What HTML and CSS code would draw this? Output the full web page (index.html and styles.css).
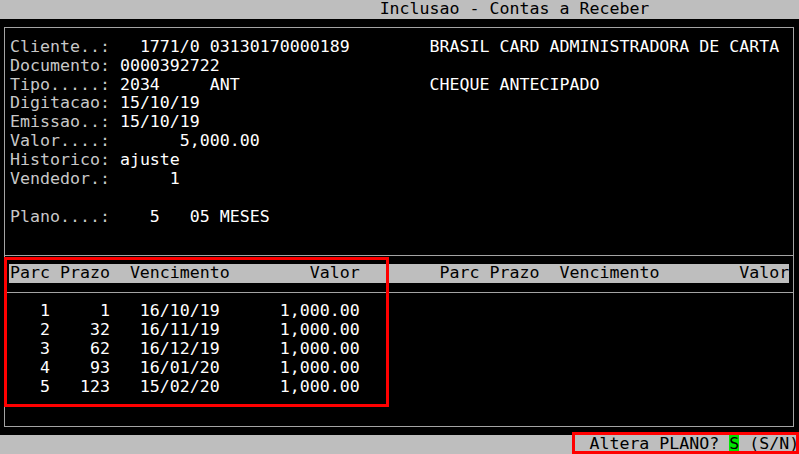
FILE: index.html
```html
<!DOCTYPE html>
<html lang="pt-br">
<head>
    <meta charset="UTF-8">
    <title>Inclusao - Contas a Receber</title>
    <link rel="stylesheet" href="styles.css">
</head>
<body>
    <div class="term">
        <div class="row bar title">Inclusao - Contas a Receber</div>

        <div class="frame">
            <div class="row"><span class="lbl">Cliente..:</span>   1771/0 03130170000189        BRASIL CARD ADMINISTRADORA DE CARTA</div>
            <div class="row"><span class="lbl">Documento:</span> 0000392722</div>
            <div class="row"><span class="lbl">Tipo.....:</span> 2034     ANT                   CHEQUE ANTECIPADO</div>
            <div class="row"><span class="lbl">Digitacao:</span> 15/10/19</div>
            <div class="row"><span class="lbl">Emissao..:</span> 15/10/19</div>
            <div class="row"><span class="lbl">Valor....:</span>       5,000.00</div>
            <div class="row"><span class="lbl">Historico:</span> ajuste</div>
            <div class="row"><span class="lbl">Vendedor.:</span>      1</div>
            <div class="row"></div>
            <div class="row"><span class="lbl">Plano....:</span>    5   05 MESES</div>
            <div class="row"></div>

            <div class="row sep"></div>
            <div class="row head">Parc Prazo  Vencimento        Valor        Parc Prazo  Vencimento        Valor</div>
            <div class="row sep"></div>

            <!-- parcelas -->
            <div class="row">   1     1   16/10/19      1,000.00</div>
            <div class="row">   2    32   16/11/19      1,000.00</div>
            <div class="row">   3    62   16/12/19      1,000.00</div>
            <div class="row">   4    93   16/01/20      1,000.00</div>
            <div class="row">   5   123   15/02/20      1,000.00</div>
            <div class="row"></div>
        </div>

        <div class="row bar status">Altera PLANO? <span class="answer">S</span> (S/N)</div>

        <!-- marcacoes em vermelho -->
        <div class="mark mark-grid"></div>
        <div class="mark mark-prompt"></div>
    </div>
</body>
</html>
```

FILE: styles.css
```css
body {
    margin: 0;
    background-color: #000;
}

.term {
    position: relative;
    width: 799px;
    height: 454px;
    overflow: hidden;
    display: flex;
    flex-direction: column;
    font-family: "DejaVu Sans Mono", monospace;
    font-size: 16.6px;
    line-height: 18.9px;
    color: #fff;
    background-color: #000;
}

.row {
    height: 18.9px;
    white-space: pre;
    padding-left: 5px;
}

.lbl {
    color: #c8c8c8;
}

.bar {
    background-color: #bebebe;
    color: #000;
}

.title {
    padding-left: 38ch;
}

.status {
    margin-top: auto;
    padding-left: 59ch;
}

.answer {
    background-color: #00e600;
}

.frame {
    margin: 8.5px 5px 0 4px;
    padding: 9.4px 0 10px;
    border: 1px solid #a4a4a4;
}

.sep {
    display: flex;
    align-items: center;
    padding-left: 0;
}

.sep::before {
    content: "";
    flex: 1;
    height: 1px;
    background-color: #a4a4a4;
}

.head {
    margin: 0 4px;
    padding-left: 1px;
    background-color: #bebebe;
    color: #000;
}

.mark {
    position: absolute;
    box-sizing: border-box;
    border: 3px solid #f00;
}

.mark-grid {
    left: 4px;
    top: 257px;
    width: 385px;
    height: 150px;
}

.mark-prompt {
    left: 572px;
    top: 432px;
    width: 227px;
    height: 22px;
}
```
